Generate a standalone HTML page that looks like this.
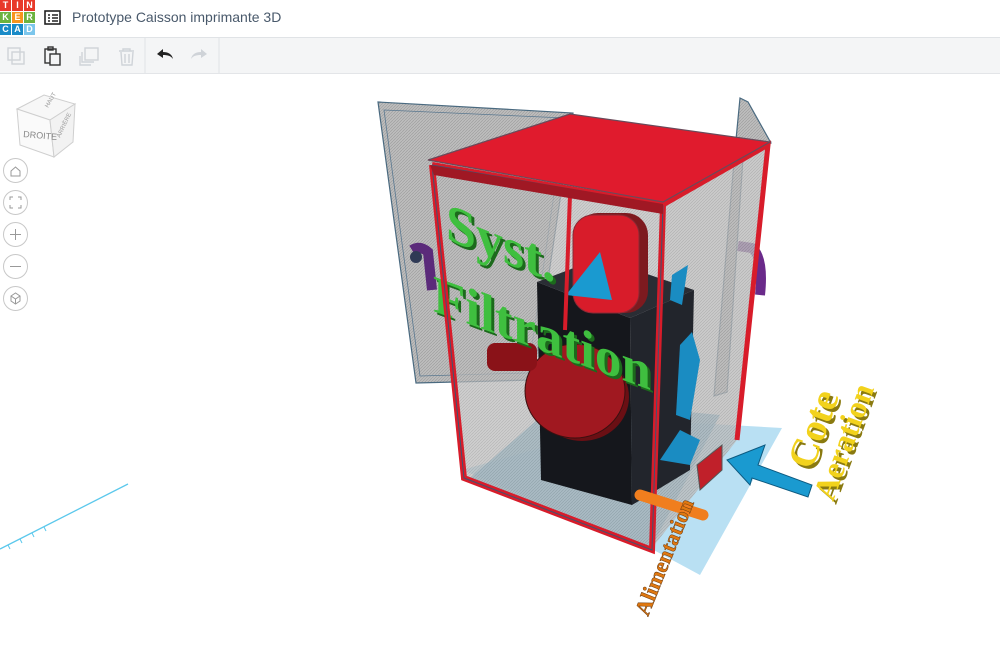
<!DOCTYPE html>
<html><head><meta charset="utf-8"><style>
body{margin:0;width:1000px;height:655px;overflow:hidden;background:#fff;font-family:"Liberation Sans",sans-serif;position:relative}
.hdr{position:absolute;left:0;top:0;width:1000px;height:37px;background:#fff;border-bottom:1px solid #e0e3e6}
.logo{position:absolute;left:0;top:0;width:36px;height:36px}
.logo div{position:absolute;width:11px;height:11px;color:#fff;font-size:9px;font-weight:bold;text-align:center;line-height:11px}
.title{position:absolute;left:72px;top:9px;font-size:14px;color:#49596b}
.tb{position:absolute;left:0;top:38px;width:1000px;height:35px;background:#f4f5f6;border-bottom:1px solid #e3e5e8}
.sc{position:absolute;top:0;left:0}
.btn{position:absolute;left:3px;width:23px;height:23px;border:1px solid #c8c8c8;border-radius:50%;background:#fff}
.bs{font-family:"Liberation Serif",serif;font-weight:700}
</style></head><body>
<div class="hdr">
 <div class="logo">
  <div style="left:0;top:0;background:#e8392a">T</div><div style="left:12px;top:0;background:#e8392a">I</div><div style="left:24px;top:0;background:#e8392a">N</div>
  <div style="left:0;top:12px;background:#6cb33f">K</div><div style="left:12px;top:12px;background:#f7941d">E</div><div style="left:24px;top:12px;background:#6cb33f">R</div>
  <div style="left:0;top:24px;background:#1a8bc8">C</div><div style="left:12px;top:24px;background:#1a8bc8">A</div><div style="left:24px;top:24px;background:#7cc6ec">D</div>
 </div>
 <svg style="position:absolute;left:44px;top:10px" width="18" height="16"><rect x="1" y="1" width="15" height="13" fill="none" stroke="#222" stroke-width="1.6"/><path d="M4 5h2M4 8h2M4 11h2M8 5h6M8 8h6M8 11h6" stroke="#222" stroke-width="1.4"/></svg>
 <div class="title">Prototype Caisson imprimante 3D</div>
</div>
<div class="tb">
 <svg width="230" height="35">
  <g fill="none" stroke="#cfd3d8" stroke-width="1.4"><rect x="8" y="10" width="12" height="12"/><rect x="12" y="14" width="12" height="12"/></g>
  <g fill="none" stroke="#333" stroke-width="1.4"><rect x="45" y="11" width="11" height="14"/><rect x="50" y="16" width="10" height="11" fill="#f4f5f6"/><rect x="48" y="9" width="5" height="3"/></g>
  <g fill="none" stroke="#cfd3d8" stroke-width="1.4"><rect x="85" y="10" width="13" height="12"/><path d="M82 14v10h12"/><path d="M80 18v9h11"/></g>
  <g fill="none" stroke="#cfd3d8" stroke-width="1.4"><path d="M119 13h15M123 13v-2h7v2M121 14l1 13h10l1-13M125 16v9M129 16v9"/></g>
  <line x1="145" y1="0" x2="145" y2="35" stroke="#e0e2e5"/>
  <path d="M157 16l6-5v3c5 0 9 2 10 7-2-3-5-4-10-4v3z" fill="#222"/>
  <path d="M207 16l-6-5v3c-5 0-9 2-10 7 2-3 5-4 10-4v3z" fill="#cfd3d8"/>
  <line x1="219" y1="0" x2="219" y2="35" stroke="#e0e2e5"/>
 </svg>
</div>
<svg class="sc" width="1000" height="655" style="top:0">
 <defs><pattern id="h" width="3" height="3" patternUnits="userSpaceOnUse"><rect width="3" height="3" fill="#bdbdbd"/><path d="M0 3L3 0" stroke="#9a9a9a" stroke-width=".6"/></pattern></defs>
 <g stroke="#cfcfcf" stroke-width="1" >
  <polygon points="17,109 44,95 75,104 50,120" fill="#f7f7f7"/>
  <polygon points="17,109 50,120 54,157 20,145" fill="#fafafa"/>
  <polygon points="50,120 75,104 73,142 54,157" fill="#f2f2f2"/>
 </g>
 <text x="23" y="137" font-size="9" fill="#888" transform="rotate(5 23 137)">DROITE</text>
 <text x="0" y="0" font-size="6" fill="#999" transform="translate(60,138) rotate(-65)">ARRIÈRE</text>
 <text x="0" y="0" font-size="6" fill="#999" transform="translate(48,108) rotate(-60)">HAUT</text>
 <line x1="0" y1="549" x2="128" y2="484" stroke="#5bc8ec" stroke-width="1.3"/>
 <g stroke="#5bc8ec" stroke-width="1"><path d="M8 545l2 4M20 539l2 4M32 533l2 4M44 527l2 4"/></g>
 <polygon points="378,102 573,113 533,380 416,383" fill="url(#h)" stroke="#4a6a80" stroke-width="1.2"/>
 <polygon points="384,110 565,118 528,373 420,376" fill="none" stroke="#5a7890" stroke-width=".8"/>
 <polygon points="740,98 748,102 771,143 743,158 727,392 714,396 735,150" fill="url(#h)" stroke="#4a6a80" stroke-width="1.2"/>
 <path d="M412,250 Q420,245 428,252 L432,290" stroke="#5b2a7a" stroke-width="10" fill="none"/>
 <circle cx="416" cy="257" r="6" fill="#2f3a55"/>
 <path d="M738,246 L752,248 Q764,258 760,295" stroke="#6a2a8a" stroke-width="10" fill="none"/>
 <polygon points="462,470 640,420 782,428 700,575 650,548" fill="#a8d8f0" opacity=".8"/>
 <polygon points="470,478 560,400 720,415 650,550" fill="#5aa8cc" opacity=".8"/>
 <polygon points="432,165 663,205 652,548 464,478" fill="url(#h)" opacity=".75"/>
 <polygon points="663,205 768,145 737,440 652,548" fill="url(#h)" opacity=".8"/>
 <polygon points="537,282 630,318 632,505 541,480" fill="#15171c"/>
 <polygon points="630,318 694,290 690,470 632,505" fill="#22252c"/>
 <polygon points="537,282 600,258 694,290 630,318" fill="#2a2d34"/>
 <rect x="576" y="213" width="72" height="100" rx="22" fill="#7d1a1f"/>
 <rect x="573" y="215" width="66" height="98" rx="20" fill="#d81c2a" stroke="#8a2a35"/>
 <polygon points="566,295 600,252 612,300" fill="#1a9ad0"/>
 <polygon points="680,345 692,332 700,360 690,420 676,415" fill="#1a8cc2"/>
 <polygon points="660,460 680,430 700,440 690,465" fill="#1a8cc2"/>
 <polygon points="672,275 688,265 682,305 670,300" fill="#1a8cc2"/>
 <ellipse cx="582" cy="397" rx="47" ry="44" fill="#6a0f14"/>
 <ellipse cx="575" cy="391" rx="50" ry="47" fill="#a01820" stroke="#3a1010"/>
 <rect x="487" y="343" width="50" height="28" rx="8" fill="#8a1218"/>
 <text class="bs" font-size="54" fill="#1c6a1c" transform="translate(449,242) skewY(22)">Syst.</text>
 <text class="bs" font-size="54" fill="#3fbf3f" transform="translate(446,239) skewY(22)">Syst.</text>
 <text class="bs" font-size="53" fill="#1c6a1c" transform="translate(436,314) skewY(20)">Filtration</text>
 <text class="bs" font-size="53" fill="#3fbf3f" transform="translate(433,311) skewY(20)">Filtration</text>
 <polyline points="432,165 663,205 652,550 464,478 432,165" fill="none" stroke="#d81c2a" stroke-width="6"/>
 <polyline points="432,165 663,205 652,550 464,478 432,165" fill="none" stroke="#3d5570" stroke-width="1"/>
 <polyline points="663,205 768,145 737,440" fill="none" stroke="#d81c2a" stroke-width="5"/>
 <line x1="570" y1="195" x2="565" y2="330" stroke="#d81c2a" stroke-width="4"/>
 <polygon points="428,160 570,114 770,142 663,202" fill="#e01b2d" stroke="#6a4a5a" stroke-width="1.2"/>
 <polygon points="430,165 663,204 663,214 434,175" fill="#a01824"/>
 <line x1="640" y1="495" x2="703" y2="515" stroke="#f07e1e" stroke-width="11" stroke-linecap="round"/>
 <polygon points="697,465 722,445 722,470 700,490" fill="#c0202a" stroke="#555"/>
 <polygon points="727,460 765,445 758,465 812,485 808,497 752,478 750,485" fill="#1a9ad0" stroke="#0d5a80"/>
 <text class="bs" font-size="40" fill="#8a7a10" transform="translate(815,474) rotate(-70)">Cote</text>
 <text class="bs" font-size="40" fill="#f2d21c" transform="translate(812,471) rotate(-70)">Cote</text>
 <text class="bs" font-size="32" fill="#8a7a10" transform="translate(836,505) rotate(-70)">Aeration</text>
 <text class="bs" font-size="32" fill="#f2d21c" transform="translate(833,502) rotate(-70)">Aeration</text>
 <text class="bs" font-size="22" fill="#e07810" stroke="#6a3a10" stroke-width=".5" transform="translate(648,617) rotate(-68)">Alimentation</text>
</svg>
<div class="btn" style="top:158px"><svg width="23" height="23"><path d="M7 12l4.5-4 4.5 4v5h-9z" fill="none" stroke="#999"/></svg></div>
<div class="btn" style="top:190px"><svg width="23" height="23"><path d="M6 9V6h3M14 6h3v3M17 14v3h-3M9 17H6v-3" fill="none" stroke="#999"/></svg></div>
<div class="btn" style="top:222px"><svg width="23" height="23"><path d="M6 11.5h11M11.5 6v11" stroke="#999"/></svg></div>
<div class="btn" style="top:254px"><svg width="23" height="23"><path d="M6 11.5h11" stroke="#999"/></svg></div>
<div class="btn" style="top:286px"><svg width="23" height="23"><path d="M7 9l4.5-3 4.5 3v5l-4.5 3-4.5-3zM7 9l4.5 3 4.5-3M11.5 12v5" fill="none" stroke="#999"/></svg></div>
</body></html>
